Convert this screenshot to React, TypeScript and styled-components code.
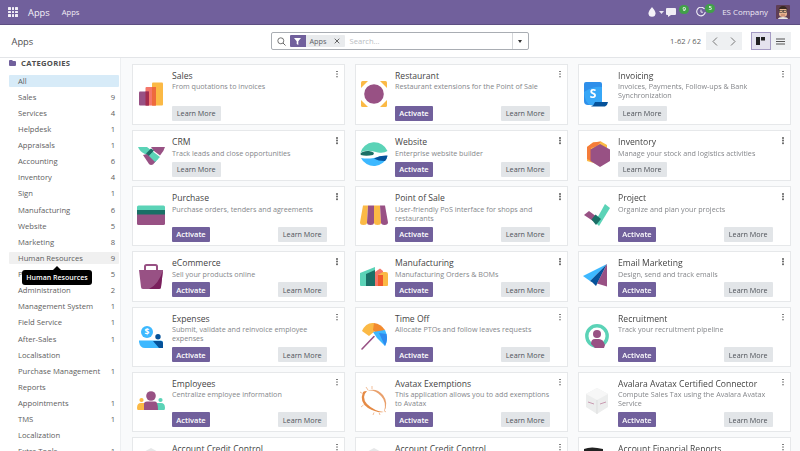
import React from "react";
import styled, { createGlobalStyle } from "styled-components";

const Global = createGlobalStyle`
  html, body { margin: 0; padding: 0; height: 100%; overflow: hidden; background: #fff; }
  #root { height: 100%; }
  * { box-sizing: border-box; }
`;

const font = `"Open Sans", "Noto Sans", "Liberation Sans", sans-serif`;

const Page = styled.div`
  width: 800px;
  height: 451px;
  display: flex;
  flex-direction: column;
  overflow: hidden;
  font-family: ${font};
  color: #4c4c4c;
  filter: blur(0.45px);
`;

const NavBar = styled.header`
  height: 25px;
  flex: none;
  background: #71609c;
  border-bottom: 1px solid #5d4f82;
  display: flex;
  align-items: center;
  padding: 0 10px 0 8px;
  color: #fff;
`;
const AppGrid = styled.div`
  width: 10px;
  height: 10px;
  display: grid;
  grid-template-columns: repeat(3, 2.6px);
  grid-auto-rows: 2.6px;
  gap: 1px;
  margin-right: 10px;
  span { background: #f2eff7; border-radius: 0.5px; }
`;
const Brand = styled.span`
  font-size: 9.3px;
  margin-right: 12px;
  color: #f4f2f8;
`;
const NavLink = styled.span`
  font-size: 7.6px;
  font-weight: 500;
  color: #f1eef6;
`;
const NavRight = styled.div`
  margin-left: auto;
  display: flex;
  align-items: center;
`;
const NavIcon = styled.span<{ $mr: number }>`
  position: relative;
  display: flex;
  margin-right: ${(p) => p.$mr}px;
`;
const Badge = styled.span<{ $left: number }>`
  position: absolute;
  left: ${(p) => p.$left}px;
  top: -3px;
  width: 10px;
  height: 9px;
  border-radius: 5px;
  background: #41a04a;
  color: #fff;
  font-size: 6px;
  font-weight: 600;
  line-height: 9px;
  text-align: center;
`;
const Company = styled.span`
  font-size: 7.9px;
  font-weight: 500;
  color: #eeeaf4;
  margin-right: 8px;
`;

const ControlPanel = styled.div`
  height: 33px;
  flex: none;
  background: #fff;
  border-bottom: 1px solid #e3e5e8;
  display: flex;
  align-items: center;
  padding: 0 9.5px 0 11.5px;
  position: relative;
`;
const PageTitle = styled.div`
  font-size: 9.3px;
  width: 259.5px;
  color: #4f4f4f;
`;
const SearchBox = styled.div`
  width: 257.5px;
  height: 18px;
  border: 1px solid #a9adb3;
  border-radius: 2px;
  display: flex;
  align-items: center;
  padding-left: 5px;
`;
const FacetIcon = styled.span`
  width: 15.5px;
  height: 12.5px;
  background: #71609c;
  border-radius: 1px 0 0 1px;
  margin-left: 4px;
  display: flex;
  align-items: center;
  justify-content: center;
`;
const FacetLabel = styled.span`
  width: 39px;
  height: 12.5px;
  background: #e9ebed;
  border-radius: 0 1px 1px 0;
  font-size: 7.3px;
  line-height: 12.5px;
  padding-left: 4px;
  color: #5f6368;
  display: flex;
  align-items: center;
  justify-content: space-between;
  padding-right: 5px;
`;
const Placeholder = styled.span`
  font-size: 7.6px;
  color: #b9bcc1;
  margin-left: 5px;
  flex: 1;
`;
const Drop = styled.span`
  width: 16px;
  height: 16px;
  border-left: 1px solid #d5d7da;
  display: flex;
  align-items: center;
  justify-content: center;
`;
const Caret = styled.i`
  width: 0;
  height: 0;
  border-left: 2.5px solid transparent;
  border-right: 2.5px solid transparent;
  border-top: 3px solid #333;
`;
const Pager = styled.div`
  margin-left: auto;
  display: flex;
  align-items: center;
`;
const PagerText = styled.span`
  font-size: 7.6px;
  color: #5f5f5f;
  margin-right: 4.5px;
`;
const BtnGroup = styled.div`
  display: flex;
  height: 18px;
  margin-right: 9px;
  &:last-child { margin-right: 0; }
`;
const GroupBtn = styled.span<{ $w: number; $active?: boolean }>`
  width: ${(p) => p.$w}px;
  height: 18px;
  background: ${(p) => (p.$active ? "#e4e2ee" : "#eef0f2")};
  border: ${(p) => (p.$active ? "1px solid #a59bc4" : "none")};
  display: flex;
  align-items: center;
  justify-content: center;
`;

const Body = styled.div`
  flex: 1;
  display: flex;
  min-height: 0;
`;
const Side = styled.aside`
  width: 121px;
  flex: none;
  background: #fff;
  border-right: 1px solid #edeff1;
  padding: 0 0 0 9px;
  position: relative;
`;
const SideHead = styled.div`
  height: 16.5px;
  display: flex;
  align-items: center;
  font-size: 7.7px;
  font-weight: 700;
  letter-spacing: 0.25px;
  color: #4f4f4f;
  gap: 5px;
  padding-bottom: 7px;
`;
const CatList = styled.div`
  display: flex;
  flex-direction: column;
  width: 110px;
`;
const Cat = styled.div<{ $state?: "active" | "hover" }>`
  height: 12px;
  margin-bottom: 4.13px;
  flex: none;
  display: flex;
  align-items: center;
  justify-content: space-between;
  padding: 0 4px 0 9px;
  font-size: 7.65px;
  color: #5e5e5e;
  border-radius: 1px;
  background: ${(p) =>
    p.$state === "active" ? "#d7ebf8" : p.$state === "hover" ? "#f0f0f0" : "transparent"};
`;
const Tip = styled.div`
  position: absolute;
  left: 22px;
  top: 211.5px;
  width: 70px;
  height: 15.5px;
  background: #000;
  border-radius: 3px;
  color: #fff;
  font-size: 7px;
  font-weight: 600;
  line-height: 15.5px;
  text-align: center;
  white-space: nowrap;
  &::before {
    content: "";
    position: absolute;
    left: 31px;
    top: -4px;
    border-left: 4px solid transparent;
    border-right: 4px solid transparent;
    border-bottom: 4px solid #000;
  }
`;

const Main = styled.main`
  flex: 1;
  background: #f9fafb;
  padding: 5.5px 9px 0 10.5px;
  overflow: hidden;
  display: grid;
  grid-template-columns: repeat(3, 1fr);
  grid-template-rows: 61.5px 51px 60px 50.5px 60px 60px 60px;
  column-gap: 9.5px;
  row-gap: 5px;
`;
const Card = styled.article`
  background: #fff;
  border: 1px solid #e6e8ea;
  display: flex;
  position: relative;
  padding: 0 0 3.5px 4px;
  min-height: 0;
`;
const IconBox = styled.div`
  width: 28px;
  flex: none;
  display: flex;
  align-items: center;
  margin-top: 2px;
  svg { display: block; overflow: visible; }
`;
const CardBody = styled.div`
  flex: 1;
  margin-left: 7.5px;
  padding-top: 5px;
  display: flex;
  flex-direction: column;
  min-width: 0;
`;
const Title = styled.div`
  font-size: 8.6px;
  line-height: 12px;
  color: #444;
  white-space: nowrap;
`;
const Desc = styled.div`
  font-size: 7.2px;
  line-height: 9px;
  color: #85878b;
  padding-right: 14px;
  margin-top: 0.5px;
`;
const Actions = styled.div`
  margin-top: auto;
  display: flex;
  justify-content: space-between;
  padding-right: 17.5px;
`;
const Btn = styled.span<{ $primary?: boolean }>`
  height: 15px;
  display: flex;
  align-items: center;
  justify-content: center;
  font-size: ${(p) => (p.$primary ? 7.5 : 7.2)}px;
  border-radius: 1px;
  width: ${(p) => (p.$primary ? 38 : 48.5)}px;
  background: ${(p) => (p.$primary ? "#71609c" : "#e2e5e8")};
  color: ${(p) => (p.$primary ? "#fff" : "#4f5359")};
  font-weight: ${(p) => (p.$primary ? 600 : 500)};
`;
const Kebab = styled.div`
  position: absolute;
  right: 6px;
  top: 6px;
  width: 1.6px;
  height: 1.6px;
  border-radius: 50%;
  background: #6b6b6b;
  box-shadow: 0 2.6px 0 #6b6b6b, 0 5.2px 0 #6b6b6b;
`;

const P = "#985184", O = "#FBB945", T = "#5BD3B7", DT = "#1A6F66", B = "#3DB8FF", DB = "#05529A";

const Ico = ({ children }: { children: React.ReactNode }) => (
  <svg width="28" height="28" viewBox="0 0 28 28">{children}</svg>
);

const icons: Record<string, React.ReactNode> = {
  sales: (
    <Ico>
      <rect x="15" y="2.5" width="11" height="23" rx="1" fill={O} />
      <rect x="8.5" y="7" width="10.5" height="18.5" rx="1" fill="#F4776B" />
      <rect x="2" y="11.5" width="10" height="14" rx="1" fill={P} />
      <rect x="8.5" y="11.5" width="3.5" height="14" fill="#A52C4D" />
      <rect x="15" y="7" width="4" height="18.5" fill="#EE6A3D" />
    </Ico>
  ),
  restaurant: (
    <Ico>
      <circle cx="14" cy="14" r="9.8" fill={P} />
      <path d="M1 2.5 Q1 1 2.5 1H8L1 8Z" fill={O} />
      <path d="M27 2.5 Q27 1 25.5 1H20L27 8Z" fill={O} />
      <path d="M1 25.5 Q1 27 2.5 27H8L1 20Z" fill={O} />
      <path d="M27 25.5 Q27 27 25.5 27H20L27 20Z" fill={O} />
    </Ico>
  ),
  invoicing: (
    <Ico>
      <path d="M1 4 Q1 2 3 2H17Q19 2 19 4V25H5Q1 25 1 21Z" fill="#2E8FEA" />
      <path d="M1 12 Q2 24 8 25.5H19V7Q10 6 1 12Z" fill="#3DB8FF" opacity="0.6" />
      <path d="M8 26.5 Q11 25.5 12 22H25Q24.5 25.5 22 26.5Z" fill={DB} />
      <text x="10" y="18" fontSize="12" fontWeight="700" fill="#fff" textAnchor="middle" fontFamily="Open Sans">S</text>
    </Ico>
  ),
  crm: (
    <Ico>
      <path d="M1 6H10L23 16 17 22 8 13Q3 11 1 6Z" fill={T} />
      <path d="M14 6H28Q27 10 23 14.5L17 10Z" fill={P} />
      <path d="M6 14 10 13 19 20 16 23.5Q13.5 24.5 12 23Z" fill={P} />
      <path d="M9 12.5 14 7.5 17 9.5 12 15Z" fill={DT} />
      <path d="M12 15 15 12 21 18 18 21Z" fill={T} />
    </Ico>
  ),
  website: (
    <Ico>
      <path d="M0.5 12 A14 13 0 0 1 27.5 10 Q24 12.5 18 11.5 Q10 9 4 10 Q1.5 10.8 0.5 12Z" fill={T} />
      <path d="M0.5 12.5 Q3 9.5 9 10 Q16 11 13 14 Q6 15.5 0.8 14Z" fill={DT} />
      <path d="M1 17 Q7 18 14 17 Q21 14.5 27.5 15 A14 13 0 0 1 1 17Z" fill={B} />
      <path d="M14 17.5 Q20 14 27.5 14.5 Q27 18 25 20 Q18 20 14 17.5Z" fill={DB} />
    </Ico>
  ),
  inventory: (
    <Ico>
      <path d="M10 1.5 18 0.5 24 4V20L14 23 4 20V6Z" fill={O} />
      <path d="M4 6 10 1.5 18 0.5 14 5 8 7V20L4 18Z" fill="#F57C3A" />
      <path d="M17 3 27 8.5V20L17 26 7.5 20V8.5Z" fill={P} />
    </Ico>
  ),
  purchase: (
    <Ico>
      <path d="M0 6 Q0 4.5 1.5 4.5H26.5Q28 4.5 28 6V10H0Z" fill={T} />
      <rect y="9" width="28" height="5" fill={DT} />
      <path d="M0 13.5H28V22.5Q28 24 26.5 24H1.5Q0 24 0 22.5Z" fill={P} />
    </Ico>
  ),
  pos: (
    <Ico>
      <path d="M3 4.5H8L7 21.5A3.5 2.5 0 0 1 0 21.5Z" fill={O} />
      <path d="M8 4.5H14V21.5A3.5 2.5 0 0 1 7 21.5Z" fill={P} />
      <path d="M14 4.5H20L21 21.5A3.5 2.5 0 0 1 14 21.5Z" fill={O} />
      <path d="M20 4.5H25L28 21.5A3.5 2.5 0 0 1 21 21.5Z" fill={P} />
    </Ico>
  ),
  project: (
    <Ico>
      <path d="M12 21 22 3 27 7 16 25Z" fill={T} />
      <path d="M1 14 6 10 14 16 10 20Z" fill={P} />
      <path d="M8.5 18.5 12.5 13.5 18 18 13 24Z" fill={DT} />
    </Ico>
  ),
  ecommerce: (
    <Ico>
      <path d="M8 8V4.5Q8 3 9.5 3H18.5Q20 3 20 4.5V8" fill="none" stroke={P} strokeWidth="2" />
      <path d="M2 8 H26 L24 25 Q24 27 22 27H6Q4 27 4 25Z" fill={P} />
      <path d="M26 8 24 25Q24 27 22 27H12Q22 22 26 8Z" fill="#7A1F5C" />
    </Ico>
  ),
  manufacturing: (
    <Ico>
      <path d="M0 11 15 5 15 24H1Q0 24 0 23Z" fill={T} />
      <path d="M6 12 15 8V24H6Z" fill={DT} />
      <path d="M15 10 20 6.5 23 9V24H15Z" fill="#F4776B" />
      <path d="M18 13 23 10H26Q28 10 28 12V23Q28 24 27 24H18Z" fill={O} />
      <rect x="18" y="13" width="5" height="11" fill="#F0582E" />
    </Ico>
  ),
  email: (
    <Ico>
      <path d="M0 14 24 2 7 19Z" fill={B} />
      <path d="M7 19 24 2 13 24 9.5 20.5Z" fill={DB} />
      <path d="M14 21.5 24 2V24.5Z" fill={P} />
    </Ico>
  ),
  expenses: (
    <Ico>
      <circle cx="10" cy="10" r="6" fill={B} />
      <text x="10" y="13" fontSize="8.5" fontWeight="700" fill="#fff" textAnchor="middle" fontFamily="Open Sans">$</text>
      <circle cx="21" cy="14.8" r="2.7" fill={DB} />
      <path d="M2 18.5H18L24 18.5Q26 18.5 26 21V26H8Q3 26 2 20Z" fill={B} />
      <path d="M16 19H24Q26 19 26 21V26H22Z" fill={DB} />
    </Ico>
  ),
  timeoff: (
    <Ico>
      <path d="M2 9 Q6 0 14 1 L15 9 9 14Z" fill={O} />
      <path d="M14 1 Q21 2 25 8 L17 12 13 8Z" fill="#F28A2E" />
      <path d="M13 10 25 8 Q29 16 25 24 L17 16Z" fill={B} />
      <path d="M19 11 26.5 12 Q28 18 25 24Z" fill="#2E8BEF" />
      <path d="M2 27 14 14.5" stroke={P} strokeWidth="1.6" strokeLinecap="round" />
    </Ico>
  ),
  recruitment: (
    <Ico>
      <circle cx="14" cy="14" r="10.2" fill="none" stroke={T} strokeWidth="3.4" />
      <circle cx="14" cy="12" r="4" fill={P} />
      <path d="M8 22 Q8 17 12 17H16Q20 17 22 23L21 26H12Z" fill={P} />
    </Ico>
  ),
  employees: (
    <Ico>
      <circle cx="14" cy="9" r="4.8" fill={P} />
      <circle cx="4.5" cy="13" r="2.1" fill={O} />
      <circle cx="23.5" cy="13" r="2.1" fill={T} />
      <path d="M0 21 Q0 16 4 16H10V23H1Q0 23 0 21Z" fill={O} />
      <path d="M18 16H24Q28 16 28 21 Q28 23 27 23H18Z" fill={T} />
      <path d="M7 17 Q7 14.5 10 14.5H18Q21 14.5 21 23H7Z" fill={P} />
    </Ico>
  ),
  avatax: (
    <Ico>
      <path d="M3 5 Q-1 15 8 21 Q16 26 24 25 Q14 24 7 17 Q1 10 7 4 Q4 4 3 5Z" fill="#E58A45" />
      <path d="M7 4 Q16 0 23 8 Q29 16 24 25 Q27 15 21 9 Q14 2 7 4Z" fill="#E9A06C" />
      <path d="M6 0 8 3M12 -1V2M0 5 2.5 6.5M26 25 24 23.5M20 28 19 25.5M13 28 14 25.5M1 20 3.5 18" stroke="#EBA26E" strokeWidth="0.7" />
    </Ico>
  ),
  avalara: (
    <Ico>
      <path d="M14 1 25 7V20L14 27 3 20V7Z" fill="#eceded" />
      <path d="M14 1 25 7 14 13 3 7Z" fill="#f7f7f7" />
      <path d="M14 13V27" stroke="#d9d9d9" strokeWidth="0.7" />
      <path d="M5 15 11 17M17 17 23 15" stroke="#c89ab0" strokeWidth="1" />
    </Ico>
  ),
  credit: (
    <Ico>
      <path d="M14 -4 25 2V20L14 27 3 20V2Z" fill="#e6e7e8" />
    </Ico>
  ),
  reports: (
    <Ico>
      <path d="M1 -3 Q8 -6 20 -3 V12 H1Z" fill="#222" />
    </Ico>
  ),
};

type App = { t: string; d: string; i: string; a?: boolean };

const apps: App[] = [
  { t: "Sales", d: "From quotations to invoices", i: "sales" },
  { t: "Restaurant", d: "Restaurant extensions for the Point of Sale", i: "restaurant", a: true },
  { t: "Invoicing", d: "Invoices, Payments, Follow-ups & Bank Synchronization", i: "invoicing" },
  { t: "CRM", d: "Track leads and close opportunities", i: "crm" },
  { t: "Website", d: "Enterprise website builder", i: "website", a: true },
  { t: "Inventory", d: "Manage your stock and logistics activities", i: "inventory" },
  { t: "Purchase", d: "Purchase orders, tenders and agreements", i: "purchase", a: true },
  { t: "Point of Sale", d: "User-friendly PoS interface for shops and restaurants", i: "pos", a: true },
  { t: "Project", d: "Organize and plan your projects", i: "project", a: true },
  { t: "eCommerce", d: "Sell your products online", i: "ecommerce", a: true },
  { t: "Manufacturing", d: "Manufacturing Orders & BOMs", i: "manufacturing", a: true },
  { t: "Email Marketing", d: "Design, send and track emails", i: "email", a: true },
  { t: "Expenses", d: "Submit, validate and reinvoice employee expenses", i: "expenses", a: true },
  { t: "Time Off", d: "Allocate PTOs and follow leaves requests", i: "timeoff", a: true },
  { t: "Recruitment", d: "Track your recruitment pipeline", i: "recruitment", a: true },
  { t: "Employees", d: "Centralize employee information", i: "employees", a: true },
  { t: "Avatax Exemptions", d: "This application allows you to add exemptions to Avatax", i: "avatax", a: true },
  { t: "Avalara Avatax Certified Connector", d: "Compute Sales Tax using the Avalara Avatax Service", i: "avalara", a: true },
  { t: "Account Credit Control", d: "", i: "credit", a: true },
  { t: "Account Credit Control", d: "", i: "credit", a: true },
  { t: "Account Financial Reports", d: "", i: "reports", a: true },
];

const cats: [string, string, ("active" | "hover")?][] = [
  ["All", "", "active"],
  ["Sales", "9"],
  ["Services", "4"],
  ["Helpdesk", "1"],
  ["Appraisals", "1"],
  ["Accounting", "6"],
  ["Inventory", "4"],
  ["Sign", "1"],
  ["Manufacturing", "6"],
  ["Website", "5"],
  ["Marketing", "8"],
  ["Human Resources", "9", "hover"],
  ["Productivity", "5"],
  ["Administration", "2"],
  ["Management System", "1"],
  ["Field Service", "1"],
  ["After-Sales", "1"],
  ["Localisation", ""],
  ["Purchase Management", "1"],
  ["Reports", ""],
  ["Appointments", "1"],
  ["TMS", "1"],
  ["Localization", ""],
  ["Extra Tools", "1"],
];

export default function AppPage() {
  return (
    <Page>
      <Global />
      <NavBar>
        <AppGrid>{Array.from({ length: 9 }, (_, i) => <span key={i} />)}</AppGrid>
        <Brand>Apps</Brand>
        <NavLink>Apps</NavLink>
        <NavRight>
          <NavIcon $mr={3}>
            <svg width="8" height="10" viewBox="0 0 8 10"><path d="M4 0C4 0 .5 4 .5 6.3A3.5 3.5 0 0 0 7.5 6.3C7.5 4 4 0 4 0Z" fill="#f4f2f8" /></svg>
          </NavIcon>
          <NavIcon $mr={2}>
            <svg width="5" height="3" viewBox="0 0 5 3"><path d="M0 0H5L2.5 3Z" fill="#e8e4f0" /></svg>
          </NavIcon>
          <NavIcon $mr={20}>
            <svg width="10" height="9" viewBox="0 0 10 9"><path d="M1 0H9Q10 0 10 1V6Q10 7 9 7H5L2 9V7H1Q0 7 0 6V1Q0 0 1 0Z" fill="#f1eef6" /></svg>
            <Badge $left={13}>9</Badge>
          </NavIcon>
          <NavIcon $mr={16}>
            <svg width="10" height="10" viewBox="0 0 10 10"><path d="M8.5 2A4.3 4.3 0 1 0 9.3 5.2" fill="none" stroke="#f1eef6" strokeWidth="1.1" /><path d="M5 2.6V5.2H7" fill="none" stroke="#f1eef6" strokeWidth="0.9" /></svg>
            <Badge $left={9}>5</Badge>
          </NavIcon>
          <Company>ES Company</Company>
          <svg width="14" height="14" viewBox="0 0 14 14">
            <rect width="14" height="14" rx="1" fill="#5f3e55" />
            <path d="M3 5Q3 2 7 2T11 5V9Q11 12 7 12T3 9Z" fill="#e7b48f" />
            <path d="M2.5 5.5Q3 1 7 1T11.5 5.5L10 4H4Z" fill="#3a2a22" />
            <rect x="3.5" y="5.5" width="3" height="2" fill="none" stroke="#333" strokeWidth="0.6" />
            <rect x="7.5" y="5.5" width="3" height="2" fill="none" stroke="#333" strokeWidth="0.6" />
            <path d="M5 10H9" stroke="#a5584a" strokeWidth="0.7" />
            <path d="M2 14Q2 12 7 12T12 14Z" fill="#e9e5e0" />
          </svg>
        </NavRight>
      </NavBar>
      <ControlPanel>
        <PageTitle>Apps</PageTitle>
        <SearchBox>
          <svg width="9" height="9" viewBox="0 0 9 9"><circle cx="3.8" cy="3.8" r="3" fill="none" stroke="#666" strokeWidth="0.9" /><path d="M6 6 8.5 8.5" stroke="#666" strokeWidth="1" /></svg>
          <FacetIcon>
            <svg width="7" height="7" viewBox="0 0 7 7"><path d="M0 0H7L4.3 3.2V7L2.7 6V3.2Z" fill="#fff" /></svg>
          </FacetIcon>
          <FacetLabel>
            Apps
            <svg width="6" height="6" viewBox="0 0 6 6"><path d="M.7.7 5.3 5.3M5.3.7.7 5.3" stroke="#555" strokeWidth="0.9" /></svg>
          </FacetLabel>
          <Placeholder>Search...</Placeholder>
          <Drop><Caret /></Drop>
        </SearchBox>
        <Pager>
          <PagerText>1-62 / 62</PagerText>
          <BtnGroup>
            <GroupBtn $w={18}>
              <svg width="6" height="9" viewBox="0 0 6 9"><path d="M5 .5 1 4.5 5 8.5" fill="none" stroke="#777" /></svg>
            </GroupBtn>
            <GroupBtn $w={18}>
              <svg width="6" height="9" viewBox="0 0 6 9"><path d="M1 .5 5 4.5 1 8.5" fill="none" stroke="#777" /></svg>
            </GroupBtn>
          </BtnGroup>
          <BtnGroup>
            <GroupBtn $w={20} $active>
              <svg width="9" height="8" viewBox="0 0 9 8"><rect width="4" height="8" fill="#222" /><rect x="5" width="4" height="3.5" fill="#222" /></svg>
            </GroupBtn>
            <GroupBtn $w={20}>
              <svg width="9" height="7" viewBox="0 0 9 7"><path d="M0 1H9M0 3.5H9M0 6H9" stroke="#555" strokeWidth="1.1" /></svg>
            </GroupBtn>
          </BtnGroup>
        </Pager>
      </ControlPanel>
      <Body>
        <Side>
          <SideHead>
            <svg width="7" height="6" viewBox="0 0 7 6"><path d="M0 1Q0 0 1 0H3L4 1H6Q7 1 7 2V5Q7 6 6 6H1Q0 6 0 5Z" fill="#71609c" /></svg>
            CATEGORIES
          </SideHead>
          <CatList>
            {cats.map(([n, c, s]) => (
              <Cat key={n} $state={s}>
                <span>{n}</span>
                <span>{c}</span>
              </Cat>
            ))}
          </CatList>
          <Tip>Human Resources</Tip>
        </Side>
        <Main>
          {apps.map((a, i) => (
            <Card key={i}>
              <IconBox>{icons[a.i]}</IconBox>
              <CardBody>
                <Title>{a.t}</Title>
                <Desc>{a.d}</Desc>
                <Actions>
                  {a.a && <Btn $primary>Activate</Btn>}
                  <Btn>Learn More</Btn>
                </Actions>
              </CardBody>
              <Kebab />
            </Card>
          ))}
        </Main>
      </Body>
    </Page>
  );
}
